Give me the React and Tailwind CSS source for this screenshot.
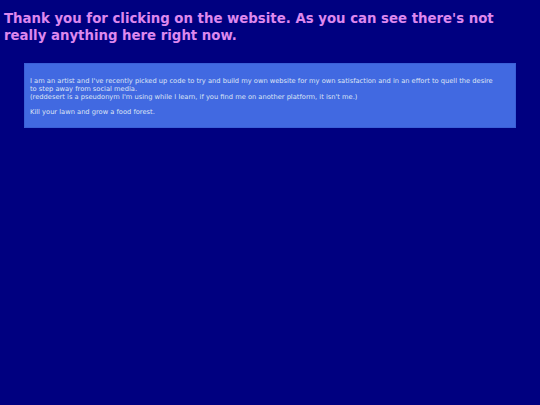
export default function App() {
  return (
    <div className="min-h-[405px] bg-[#000080] px-1 pt-[2px] font-['DejaVu_Sans',Verdana,sans-serif]">
      <h1 className="m-0 pt-[8px] text-[13.3px] font-bold leading-[17px] text-[#dd88ee]">
        Thank you for clicking on the website. As you can see there's not really anything here right now.
      </h1>
      <div className="mx-5 mt-[19px] border border-[#3a5fd6] bg-[#4169e1] pb-[4px] pl-[5px] pr-[18px] pt-[6px] text-[6.7px] leading-[8px] text-[#dde4f5]">
        <p className="my-[7px]">
          I am an artist and I've recently picked up code to try and build my own website for my own satisfaction and in an effort to quell the desire to step away from social media.
          <br />
          (reddesert is a pseudonym I'm using while I learn, if you find me on another platform, it isn't me.)
        </p>
        <p className="my-[7px]">Kill your lawn and grow a food forest.</p>
      </div>
    </div>
  )
}
